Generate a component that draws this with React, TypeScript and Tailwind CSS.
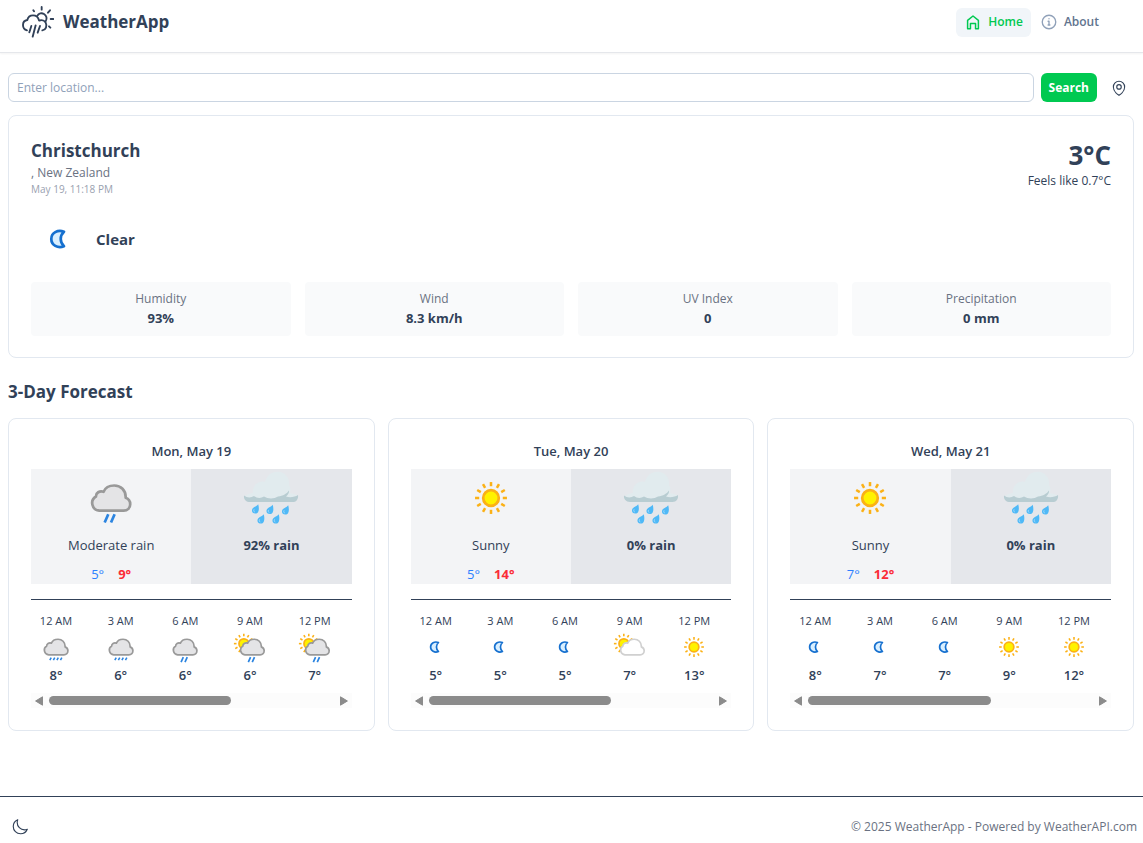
import type { ReactNode } from "react";

type IconKind = "clear" | "sunny" | "partly" | "light" | "moderate" | "patchy";

const CLOUD =
  "M19 45.9 a8.4 8.4 0 0 1 -3.6 -15.6 c-.2 -4 4 -6.7 8.4 -5.2 C25.6 20.8 30.4 18.2 35.6 18.2 c7.4 0 12.6 5.4 12.6 12.6 v1 c3.2 1.2 5 3.8 5 7 c0 4 -3 7.1 -7.2 7.1 z";

function Sun({ cx, cy }: { cx: number; cy: number }) {
  const rays = Array.from({ length: 12 }, (_, i) => i * 30);
  return (
    <g>
      <circle cx={cx} cy={cy} r="8.6" fill="#fff200" stroke="#fbb116" strokeWidth="3" />
      {rays.map((a) => (
        <line
          key={a}
          x1={cx}
          y1={cy - 13}
          x2={cx}
          y2={cy - 17.6}
          stroke="#fbb116"
          strokeWidth="2.8"
          transform={`rotate(${a} ${cx} ${cy})`}
        />
      ))}
    </g>
  );
}

function WeatherIcon({ kind, className }: { kind: IconKind; className: string }) {
  const shifted = kind === "partly" || kind === "patchy";
  return (
    <svg viewBox="0 0 64 64" className={className} aria-hidden="true">
      {kind === "clear" && (
        <path
          d="M36.4 24 C29.5 21.4 22.4 25.2 22.4 32 S29.5 42.8 36.4 40 C31.6 35.6 31.6 28.4 36.4 24 z"
          fill="#d9efff"
          stroke="#1670cf"
          strokeWidth="3"
          strokeLinejoin="round"
        />
      )}
      {kind === "sunny" && <Sun cx={32} cy={32} />}
      {shifted && <Sun cx={21} cy={26} />}
      {kind !== "clear" && kind !== "sunny" && (
        <g transform={shifted ? "translate(4 0)" : undefined}>
          <path
            d={CLOUD}
            fill={kind === "partly" ? "#ffffff" : "#e4e4e6"}
            stroke={kind === "partly" ? "#d0d0d0" : "#999999"}
            strokeWidth="3"
            strokeLinejoin="round"
          />
          {(kind === "moderate" || kind === "patchy") && (
            <path d="M29 50 L25 59 M36 50 L32 59" stroke="#2b84e0" strokeWidth="3" />
          )}
          {kind === "light" && (
            <path
              d="M23.5 51 L21 55.5 M29.8 51 L27.3 55.5 M36.1 51 L33.6 55.5 M42.4 51 L39.9 55.5"
              stroke="#2b84e0"
              strokeWidth="2.8"
            />
          )}
        </g>
      )}
    </svg>
  );
}

function RainCloud() {
  const drops = [
    [13, 38],
    [27.5, 38.5],
    [43, 39],
    [18.5, 48],
    [33.5, 48],
  ];
  return (
    <svg viewBox="0 0 58 58" className="size-[58px]" aria-hidden="true">
      <path
        d="M2 28 C5 25 9 24 11 24 C10 17 16 11 23 13 C25 6 30 2.5 36 2.8 C43 3 48 9 47 16 C49 19 48.5 22 48 24 C51 24.5 54 25.5 56 27 V30 H2 z"
        fill="#e1ebee"
      />
      <path
        d="M2 26.5 C5 29 9 29 12 27 C15 29.5 19 29.5 22 27.5 C26 30 32 30 36 27.5 C41 27 45 24.5 47 21.5 C47.5 24 45.5 26 44 27.5 C48 29 53 28 56 26 C56.5 30 54.5 33 50.5 33 H8 C4 33 1.5 30 2 26.5 z"
        fill="#b8cdd2"
      />
      {drops.map(([x, y]) => (
        <g key={`${x}-${y}`} transform={`translate(${x} ${y})`}>
          <path d="M3.2 -2.8 C4.4 1 4.2 6.6 .4 6.6 C-2.4 6.6 -3.6 4.4 -2.8 2.2 C-2 .2 1.6 -.6 3.2 -2.8 z" fill="#4fb9f7" />
          <path d="M-.9 2.4 C-1.6 3.6 -1.2 4.8 -.2 5" stroke="#a5dcfb" strokeWidth="1" fill="none" />
        </g>
      ))}
    </svg>
  );
}

function OutlineIcon({ children, className, width = 1.5 }: { children: ReactNode; className: string; width?: number }) {
  return (
    <svg
      viewBox="0 0 24 24"
      fill="none"
      stroke="currentColor"
      strokeWidth={width}
      strokeLinecap="round"
      strokeLinejoin="round"
      className={className}
      aria-hidden="true"
    >
      {children}
    </svg>
  );
}

function Logo() {
  return (
    <svg
      viewBox="0 0 96 96"
      fill="none"
      stroke="currentColor"
      strokeWidth="5.6"
      strokeLinecap="round"
      strokeLinejoin="round"
      className="size-8"
      aria-hidden="true"
    >
      <path d="M15 73 C7 71 3 65 3 57 C3 49 9 43 16 42 C18 33 25 28 33 28 C42 28 49 34 51 43 C52 44 53 44 54 43 C60 41 68 44 71 50 C76 60 72 72 61 73" />
      <path d="M46 29 C50 22 59 20 66 24 C74 29 76 38 71 46" />
      <path d="M28 60 L22 79 M41 58 L32 92 M54 60 L47 80" />
      <path d="M59 3 V11 M84 13 L78 20 M86 39 H94 M81 61 L85 65 M34 13 L36 16" />
    </svg>
  );
}

const stats = [
  ["Humidity", "93%"],
  ["Wind", "8.3 km/h"],
  ["UV Index", "0"],
  ["Precipitation", "0 mm"],
];

type Hour = [string, IconKind, string];
interface Day {
  date: string;
  icon: IconKind;
  text: string;
  rain: string;
  low: string;
  high: string;
  hours: Hour[];
}

const days: Day[] = [
  {
    date: "Mon, May 19",
    icon: "moderate",
    text: "Moderate rain",
    rain: "92% rain",
    low: "5°",
    high: "9°",
    hours: [
      ["12 AM", "light", "8°"],
      ["3 AM", "light", "6°"],
      ["6 AM", "moderate", "6°"],
      ["9 AM", "patchy", "6°"],
      ["12 PM", "patchy", "7°"],
    ],
  },
  {
    date: "Tue, May 20",
    icon: "sunny",
    text: "Sunny",
    rain: "0% rain",
    low: "5°",
    high: "14°",
    hours: [
      ["12 AM", "clear", "5°"],
      ["3 AM", "clear", "5°"],
      ["6 AM", "clear", "5°"],
      ["9 AM", "partly", "7°"],
      ["12 PM", "sunny", "13°"],
    ],
  },
  {
    date: "Wed, May 21",
    icon: "sunny",
    text: "Sunny",
    rain: "0% rain",
    low: "7°",
    high: "12°",
    hours: [
      ["12 AM", "clear", "8°"],
      ["3 AM", "clear", "7°"],
      ["6 AM", "clear", "7°"],
      ["9 AM", "sunny", "9°"],
      ["12 PM", "sunny", "12°"],
    ],
  },
];

function ScrollTrack() {
  return (
    <div className="mt-2 flex h-[15px] items-center bg-[#fcfcfc] px-1">
      <svg viewBox="0 0 8 10" className="h-2.5 w-2" aria-hidden="true">
        <path d="M7.5 .8 V9.2 L.6 5 z" fill="#8b8b8b" stroke="#8b8b8b" strokeLinejoin="round" />
      </svg>
      <div className="mx-1.5 flex-1">
        <div className="h-[9px] w-16/25 rounded-full bg-[#8b8b8b]" />
      </div>
      <svg viewBox="0 0 8 10" className="h-2.5 w-2" aria-hidden="true">
        <path d="M.5 .8 V9.2 L7.4 5 z" fill="#8b8b8b" stroke="#8b8b8b" strokeLinejoin="round" />
      </svg>
    </div>
  );
}

function DayCard({ day }: { day: Day }) {
  return (
    <article className="rounded-lg border border-slate-200 p-[22px]">
      <h3 className="text-center text-[13px] leading-5 font-semibold">{day.date}</h3>
      <div className="mt-2 grid grid-cols-2 text-center text-[13px] leading-5">
        <div className="flex flex-col items-center bg-gray-100">
          <WeatherIcon kind={day.icon} className="size-[58px]" />
          <p className="mt-2">{day.text}</p>
          <p className="mt-[9px] flex gap-3.5">
            <span className="text-blue-500">{day.low}</span>
            <span className="font-bold text-red-500">{day.high}</span>
          </p>
        </div>
        <div className="flex flex-col items-center bg-gray-200">
          <RainCloud />
          <p className="mt-2 font-bold">{day.rain}</p>
        </div>
      </div>
      <div className="mt-[15px] border-t border-slate-700 pt-[13px]">
        <ul className="flex justify-between pr-3">
          {day.hours.map(([time, icon, temp]) => (
            <li key={time} className="flex w-[50px] flex-col items-center">
              <span className="text-[11px] leading-4 whitespace-nowrap">{time}</span>
              <WeatherIcon kind={icon} className="size-9" />
              <span className="text-[13px] leading-5 font-semibold">{temp}</span>
            </li>
          ))}
        </ul>
        <ScrollTrack />
      </div>
    </article>
  );
}

export default function App() {
  return (
    <div className="flex min-h-screen flex-col bg-white font-['Open_Sans','Noto_Sans',sans-serif] text-[12px] text-slate-700">
      <header className="flex items-center justify-between border-b border-gray-200 pt-[6px] pr-9 pb-[14px] pl-[22px] shadow-xs">
        <a href="#home" className="flex items-center gap-[9px]">
          <Logo />
          <span className="text-[17px] leading-6 font-bold">WeatherApp</span>
        </a>
        <nav className="flex items-center gap-px text-[12px] leading-5 font-semibold">
          <a href="#home" className="flex h-[29px] items-center gap-1.5 rounded-md bg-slate-100 px-2 text-[#00c951]">
            <OutlineIcon className="size-[18px]" width={2}>
              <path d="M4.8 9.8 L12 4 L19.2 9.8 V21 H15.4 V14 H8.6 V21 H4.8 z" />
            </OutlineIcon>
            Home
          </a>
          <a href="#about" className="flex h-[29px] items-center gap-1.5 rounded-md px-2 text-slate-500">
            <OutlineIcon className="size-[18px] text-slate-400" width={1.8}>
              <circle cx="12" cy="12" r="9" />
              <path d="M12 11 V16 M12 7.6 V7.8 M10.8 11 H12 M10.8 16 H13.2" />
            </OutlineIcon>
            About
          </a>
        </nav>
      </header>

      <main className="flex-1 pt-5 pr-[9px] pl-2">
        <form className="flex items-center gap-[7px]" onSubmit={(e) => e.preventDefault()}>
          <input
            type="text"
            aria-label="Location"
            placeholder="Enter location..."
            className="h-[29px] min-w-0 flex-1 rounded-md border border-slate-300 px-2 text-[12px] placeholder:text-slate-400"
          />
          <button type="submit" className="h-[29px] rounded-md bg-[#00c951] px-2 text-[12px] font-bold text-white">
            Search
          </button>
          <button type="button" aria-label="Use my location" className="px-1.5 py-1">
            <OutlineIcon className="size-[18px]">
              <path d="M15 10.5a3 3 0 1 1-6 0 3 3 0 0 1 6 0Z" />
              <path d="M19.5 10.5c0 7.142-7.5 11.25-7.5 11.25S4.5 17.642 4.5 10.5a7.5 7.5 0 1 1 15 0Z" />
            </OutlineIcon>
          </button>
        </form>

        <section className="mt-[13px] rounded-lg border border-slate-200 px-[22px] pt-[22px] pb-[21px]">
          <div className="flex items-start justify-between">
            <div>
              <h2 className="text-[17px] leading-[26px] font-bold">Christchurch</h2>
              <p className="leading-[18px] text-gray-500">, New Zealand</p>
              <p className="text-[10px] leading-[14px] text-gray-400">May 19, 11:18 PM</p>
            </div>
            <div className="text-right">
              <p className="text-[26px] leading-[34px] font-bold">3°C</p>
              <p className="leading-[18px]">Feels like 0.7°C</p>
            </div>
          </div>
          <div className="mt-[14px] flex items-center gap-[7px]">
            <WeatherIcon kind="clear" className="size-[58px]" />
            <p className="text-[15px] leading-6 font-bold">Clear</p>
          </div>
          <dl className="mt-[14px] grid grid-cols-4 gap-[14px] text-center leading-5">
            {stats.map(([label, value]) => (
              <div key={label} className="rounded-sm bg-gray-50 px-2 pt-[7px] pb-2">
                <dt className="text-gray-500">{label}</dt>
                <dd className="text-[13px] leading-[19px] font-bold">{value}</dd>
              </div>
            ))}
          </dl>
        </section>

        <h2 className="mt-[22px] mb-[14px] text-[17px] leading-6 font-bold">3-Day Forecast</h2>
        <div className="grid grid-cols-3 gap-[13px]">
          {days.map((day) => (
            <DayCard key={day.date} day={day} />
          ))}
        </div>
      </main>

      <footer className="mt-[22px] flex items-center justify-between border-t border-slate-700 px-[6px] pt-4 pb-[2px]">
        <button type="button" aria-label="Toggle dark mode" className="p-[5px]">
          <OutlineIcon className="size-[18px]">
            <path d="M21.752 15.002A9.72 9.72 0 0 1 18 15.75c-5.385 0-9.75-4.365-9.75-9.75 0-1.33.266-2.597.748-3.752A9.753 9.753 0 0 0 3 11.25C3 16.635 7.365 21 12.75 21a9.753 9.753 0 0 0 9.002-5.998Z" />
          </OutlineIcon>
        </button>
        <p className="leading-5 text-gray-500">© 2025 WeatherApp - Powered by WeatherAPI.com</p>
      </footer>
    </div>
  );
}
